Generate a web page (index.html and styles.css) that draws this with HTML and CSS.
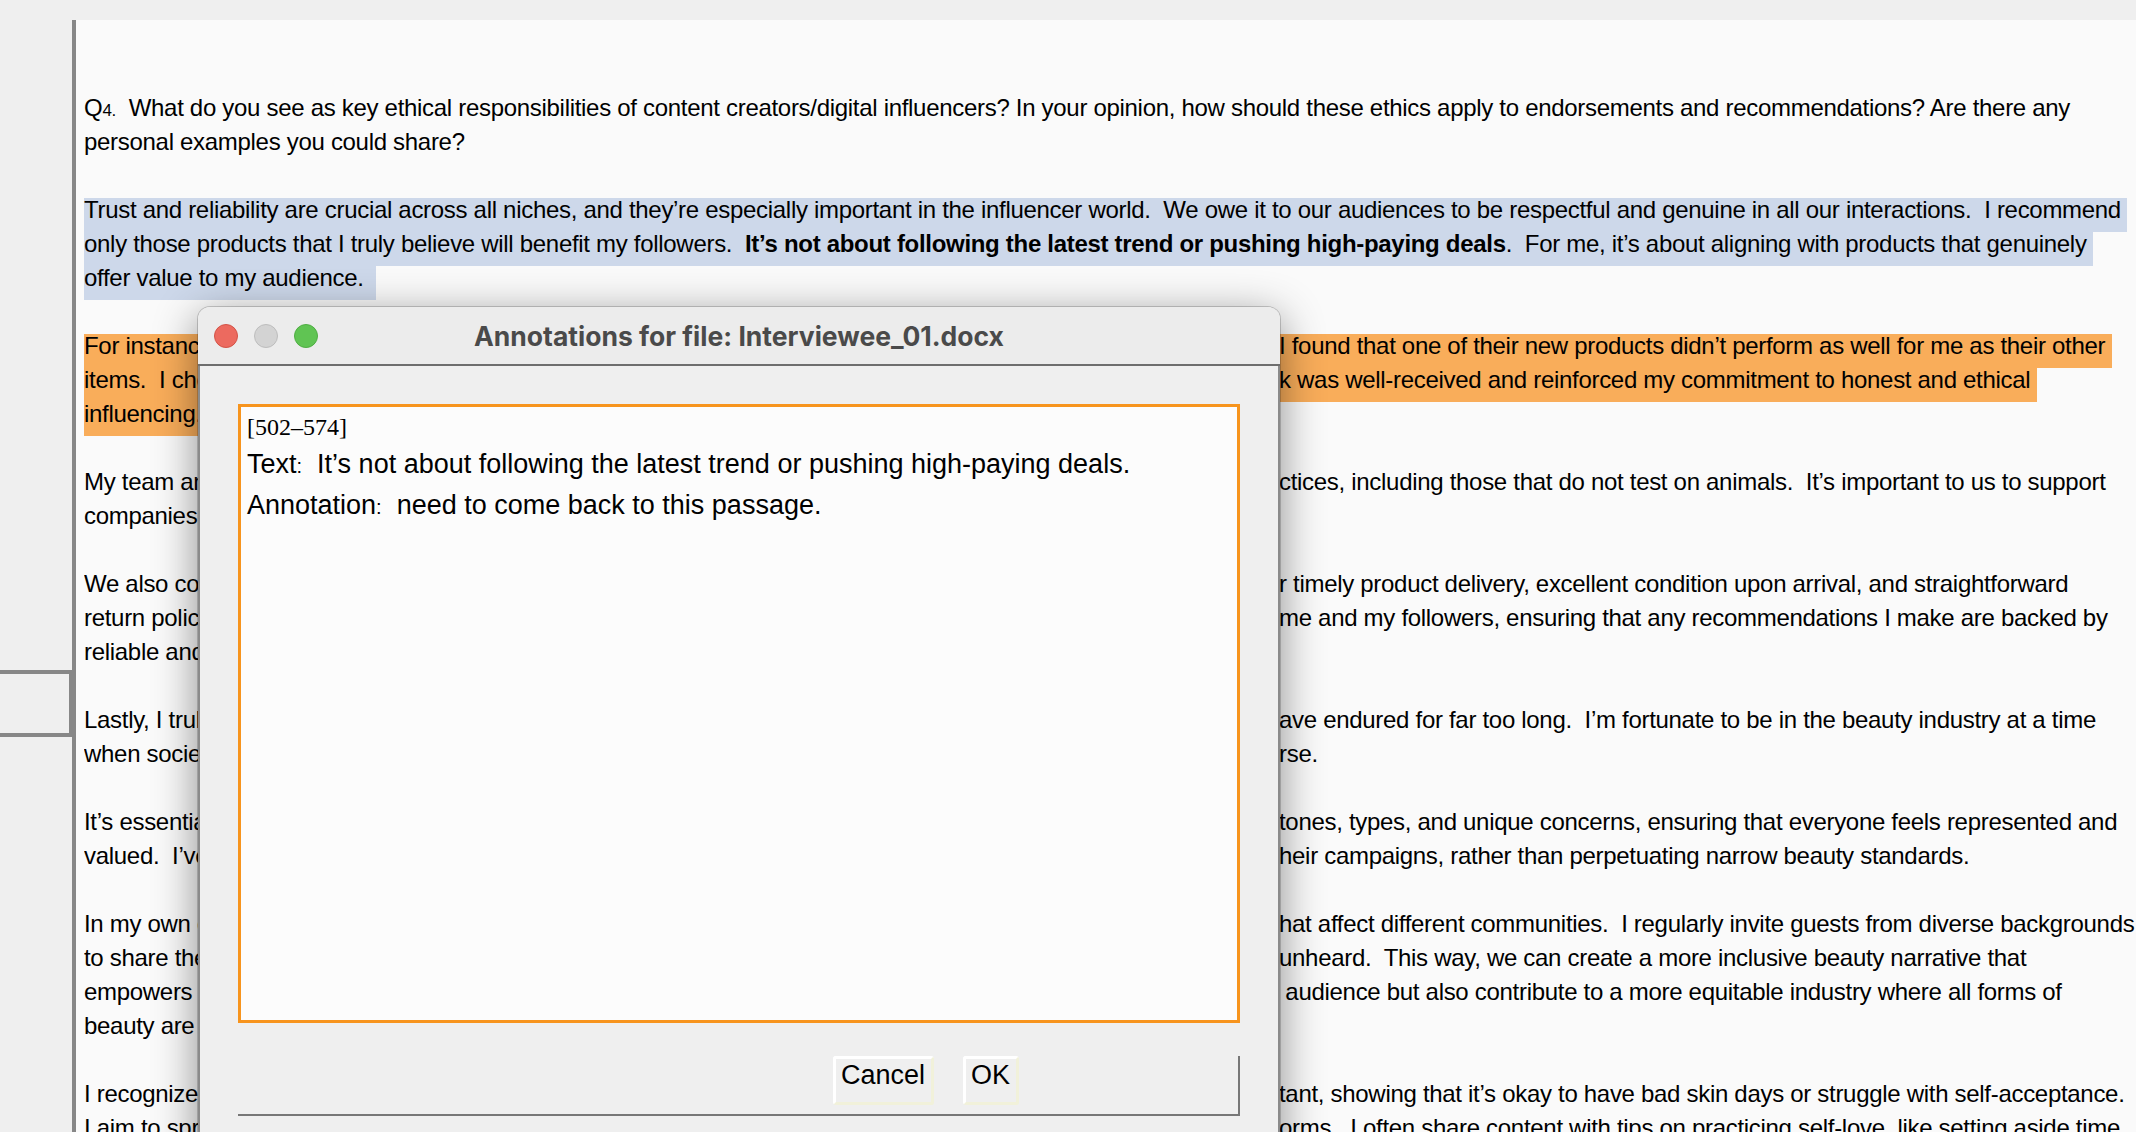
FILE: index.html
```html
<!DOCTYPE html>
<html>
<head>
<meta charset="utf-8">
<title>Annotations</title>
<link rel="stylesheet" href="styles.css">
</head>
<body>
<div class="app">
  <div class="main">
    <aside class="sidebar"><div class="sidebox"></div></aside>
    <div class="doc">
      <div class="para">
        <div class="line"><span>Q<span class="sm">4.</span>  What do you see as key ethical responsibilities of content creators/digital influencers? In your opinion, how should these ethics apply to endorsements and recommendations? Are there any</span></div>
        <div class="line"><span>personal examples you could share?</span></div>
      </div>
      <div class="para">
        <div class="line"><span class="hl-b">Trust and reliability are crucial across all niches, and they’re especially important in the influencer world.  We owe it to our audiences to be respectful and genuine in all our interactions.  I recommend </span></div>
        <div class="line"><span class="hl-b">only those products that I truly believe will benefit my followers.  <b>It’s not about following the latest trend or pushing high-paying deals</b>.  For me, it’s about aligning with products that genuinely </span></div>
        <div class="line"><span class="hl-b">offer value to my audience.  </span></div>
      </div>
      <div class="para">
        <div class="line"><span class="a hl-o">For instance, when I partnered with a well-known skincare brand last year, </span><span class="b hl-o">I found that one of their new products didn’t perform as well for me as their other </span></div>
        <div class="line"><span class="a hl-o">items.  I chose to share my honest experience with my audience, and the feedbac</span><span class="b hl-o">k was well-received and reinforced my commitment to honest and ethical </span></div>
        <div class="line"><span class="a hl-o">influencing.  </span></div>
      </div>
      <div class="para">
        <div class="line"><span class="a">My team and I prioritize partnering with brands that uphold ethical pra</span><span class="b">ctices, including those that do not test on animals.  It’s important to us to support</span></div>
        <div class="line"><span>companies that share our values.</span></div>
      </div>
      <div class="para">
        <div class="line"><span class="a">We also consider the brand’s customer service track record, looking fo</span><span class="b">r timely product delivery, excellent condition upon arrival, and straightforward</span></div>
        <div class="line"><span class="a">return policies.  These factors are crucial because they affect both </span><span class="b">me and my followers, ensuring that any recommendations I make are backed by</span></div>
        <div class="line"><span>reliable and positive experiences.</span></div>
      </div>
      <div class="para">
        <div class="line"><span class="a">Lastly, I truly believe in promoting diversity and inclusion, addressing biases that many h</span><span class="b">ave endured for far too long.  I’m fortunate to be in the beauty industry at a time</span></div>
        <div class="line"><span class="a">when society is finally embracing beauty that is as varied as the unive</span><span class="b">rse.</span></div>
      </div>
      <div class="para">
        <div class="line"><span class="a">It’s essential to me to represent a wide range of skin </span><span class="b">tones, types, and unique concerns, ensuring that everyone feels represented and</span></div>
        <div class="line"><span class="a">valued.  I’ve also made it a point to work with brands that feature diversity in t</span><span class="b">heir campaigns, rather than perpetuating narrow beauty standards.</span></div>
      </div>
      <div class="para">
        <div class="line"><span class="a">In my own content, I make an effort to highlight issues t</span><span class="b">hat affect different communities.  I regularly invite guests from diverse backgrounds</span></div>
        <div class="line"><span class="a">to share their stories and experiences, giving voice to those often </span><span class="b">unheard.  This way, we can create a more inclusive beauty narrative that</span></div>
        <div class="line"><span class="a">empowers individuals.  Together, we not only inspire our</span><span class="b"> audience but also contribute to a more equitable industry where all forms of</span></div>
        <div class="line"><span>beauty are celebrated.</span></div>
      </div>
      <div class="para">
        <div class="line"><span class="a">I recognize that being open about my own struggles is impor</span><span class="b">tant, showing that it’s okay to have bad skin days or struggle with self-acceptance.</span></div>
        <div class="line"><span class="a">I aim to spread positivity across all my social media platf</span><span class="b">orms.  I often share content with tips on practicing self-love, like setting aside time</span></div>
      </div>
    </div>
  </div>

  <div class="dialog">
    <div class="titlebar">
      <div class="lights">
        <span class="light red"></span>
        <span class="light grey"></span>
        <span class="light green"></span>
      </div>
      <div class="title">Annotations for file: Interviewee_01.docx</div>
      <div></div>
    </div>
    <div class="dbody">
      <div class="notes">
        <div class="range">[502–574]</div>
        <div class="nline">Text<span class="colon">:</span>  It’s not about following the latest trend or pushing high-paying deals.</div>
        <div class="nline">Annotation<span class="colon">:</span>  need to come back to this passage.</div>
      </div>
      <div class="btnframe">
        <button class="btn">Cancel</button>
        <button class="btn">OK</button>
      </div>
    </div>
  </div>
</div>
</body>
</html>
```

FILE: styles.css
```css
html, body {
  margin: 0;
  padding: 0;
  overflow: hidden;
  background: #efefef;
  font-family: "Liberation Sans", Arial, Helvetica, sans-serif;
}

.app {
  position: relative;
  width: 2136px;
  height: 1132px;
  box-sizing: border-box;
  padding-top: 20px;
  overflow: hidden;
}

.main {
  display: flex;
  height: 100%;
}

.sidebar {
  width: 72px;
  flex: none;
  box-sizing: border-box;
  padding-top: 650px;
  background: #efefef;
}

.sidebox {
  height: 67px;
  margin-left: -4px;
  box-sizing: border-box;
  border: 4px solid #878787;
  border-right-width: 3px;
}

.doc {
  flex: 1;
  background: #fafafa;
  border-left: 4px solid #878787;
  padding: 76px 0 0 8px;
  color: #000;
  font-size: 24px;
  letter-spacing: -0.3px;
}

.para {
  margin-bottom: 34px;
}

.line {
  display: flex;
  height: 34px;
  line-height: 24px;
  white-space: pre;
}

.line > span {
  flex: none;
}

.line .a {
  width: 1195px;
  overflow: hidden;
}

.sm {
  font-size: 17px;
}

.hl-b {
  background: #cdd8ea;
}

.hl-o {
  background: #f9ad5a;
}

/* dialog */
.dialog {
  position: absolute;
  left: 198px;
  top: 307px;
  width: 1082px;
  height: 900px;
  display: flex;
  flex-direction: column;
  background: #efefef;
  border-radius: 12px 12px 0 0;
  box-shadow: 0 10px 44px rgba(0, 0, 0, 0.45), 0 0 0 1px rgba(0, 0, 0, 0.18);
}

.titlebar {
  height: 57px;
  flex: none;
  display: grid;
  grid-template-columns: 1fr auto 1fr;
  align-items: center;
  background: #ececec;
  border-bottom: 2px solid #6e6e6e;
  border-radius: 12px 12px 0 0;
}

.lights {
  display: flex;
  gap: 16px;
  padding-left: 16px;
}

.light {
  width: 24px;
  height: 24px;
  border-radius: 50%;
  box-sizing: border-box;
}

.red {
  background: #ec6a5f;
  border: 1px solid #d35347;
}

.grey {
  background: #d3d3d3;
  border: 1px solid #bdbdbd;
}

.green {
  background: #60c453;
  border: 1px solid #4fae43;
}

.title {
  font-family: "Inter", "Liberation Sans", sans-serif;
  font-weight: 700;
  font-size: 26.5px;
  color: #4a4a4a;
}

.dbody {
  flex: 1;
  border-left: 2px solid #8a8a8a;
  border-right: 2px solid #8a8a8a;
  padding: 38px 0 0 38px;
}

.notes {
  width: 1002px;
  height: 619px;
  box-sizing: border-box;
  border: 3.5px solid #f7941d;
  background: #fcfcfc;
  padding: 2px 6px;
  color: #000;
}

.range {
  font-family: "Liberation Serif", "Times New Roman", serif;
  font-size: 24px;
  line-height: 36px;
}

.nline {
  font-size: 27px;
  line-height: 39px;
  white-space: pre;
}

.colon {
  font-size: 20px;
}

.btnframe {
  margin-top: 33px;
  width: 1002px;
  height: 60px;
  box-sizing: border-box;
  border-right: 2px solid #777;
  border-bottom: 2px solid #777;
  display: flex;
  justify-content: flex-end;
  align-items: flex-start;
  gap: 29px;
  padding-right: 219px;
}

.btn {
  font-family: "Liberation Sans", Arial, sans-serif;
  font-size: 27px;
  line-height: 32px;
  padding: 0 6px 11px 5px;
  margin: 0;
  color: #000;
  background: #efefef;
  border: 3px solid;
  border-color: #ffffff #f1f1da #f1f1da #ffffff;
  border-radius: 3px;
}
```
